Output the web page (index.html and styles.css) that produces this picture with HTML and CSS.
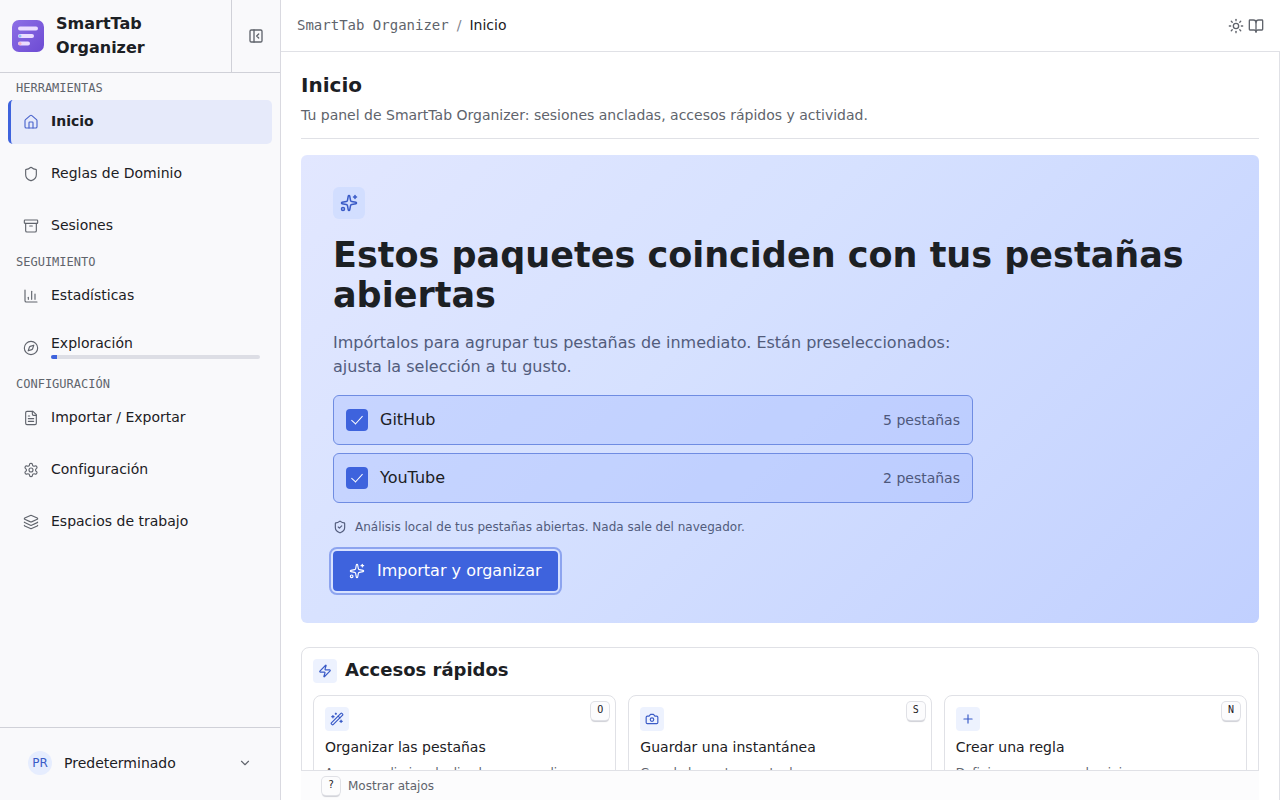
FILE: index.html
```
<!DOCTYPE html>
<html lang="es">
<head>
    <meta charset="UTF-8">
    <meta name="viewport" content="width=device-width, initial-scale=1.0">
    <title>SmartTab Organizer</title>
    <link rel="stylesheet" href="styles.css">
</head>
<body>
    <aside class="sidebar">
        <div class="brand">
            <div class="brand-name">
                <svg class="logo" viewBox="0 0 32 32" aria-hidden="true">
                    <defs>
                        <linearGradient id="logo-bg" x1="0" y1="0" x2="1" y2="1">
                            <stop offset="0" stop-color="#8d6fe6"/>
                            <stop offset="1" stop-color="#6d4bd3"/>
                        </linearGradient>
                    </defs>
                    <rect width="32" height="32" rx="7" fill="url(#logo-bg)"/>
                    <rect x="6" y="6.500" width="20" height="4" rx="2" fill="#eadcff"/>
                    <rect x="6" y="14" width="16" height="4" rx="2" fill="#eadcff"/>
                    <rect x="6" y="21.500" width="12" height="4" rx="2" fill="#eadcff"/>
                    <circle cx="8" cy="16" r="1.500" fill="#8cc4f5"/>
                    <circle cx="8" cy="23.500" r="1.500" fill="#f7b3c8"/>
                </svg>
                <strong>SmartTab Organizer</strong>
            </div>
            <button class="collapse" type="button" aria-label="Contraer barra lateral">
                <svg class="icon" viewBox="0 0 24 24"><rect width="18" height="18" x="3" y="3" rx="2"/><path d="M9 3v18"/><path d="m16 15-3-3 3-3"/></svg>
            </button>
        </div>

        <nav class="nav">
            <h2>Herramientas</h2>
            <ul>
                <li><a class="active" href="#inicio">
                    <svg class="icon" viewBox="0 0 24 24"><path d="M15 21v-8a1 1 0 0 0-1-1h-4a1 1 0 0 0-1 1v8"/><path d="M3 10a2 2 0 0 1 .709-1.528l7-5.999a2 2 0 0 1 2.582 0l7 5.999A2 2 0 0 1 21 10v9a2 2 0 0 1-2 2H5a2 2 0 0 1-2-2z"/></svg>
                    <span>Inicio</span></a></li>
                <li><a href="#reglas">
                    <svg class="icon" viewBox="0 0 24 24"><path d="M20 13c0 5-3.500 7.500-7.660 8.950a1 1 0 0 1-.67-.01C7.500 20.500 4 18 4 13V6a1 1 0 0 1 1-1c2 0 4.500-1.200 6.240-2.720a1.170 1.170 0 0 1 1.520 0C14.510 3.810 17 5 19 5a1 1 0 0 1 1 1z"/></svg>
                    <span>Reglas de Dominio</span></a></li>
                <li><a href="#sesiones">
                    <svg class="icon" viewBox="0 0 24 24"><rect width="20" height="5" x="2" y="3" rx="1"/><path d="M4 8v11a2 2 0 0 0 2 2h12a2 2 0 0 0 2-2V8"/><path d="M10 12h4"/></svg>
                    <span>Sesiones</span></a></li>
            </ul>
            <h2>Seguimiento</h2>
            <ul>
                <li><a href="#estadisticas">
                    <svg class="icon" viewBox="0 0 24 24"><path d="M3 3v16a2 2 0 0 0 2 2h16"/><path d="M18 17V9"/><path d="M13 17V5"/><path d="M8 17v-3"/></svg>
                    <span>Estadísticas</span></a></li>
                <li><a href="#exploracion">
                    <svg class="icon" viewBox="0 0 24 24"><circle cx="12" cy="12" r="10"/><path d="m16.240 7.760-1.804 5.411a2 2 0 0 1-1.265 1.265L7.760 16.240l1.804-5.411a2 2 0 0 1 1.265-1.265z"/></svg>
                    <span class="explore">Exploración
                        <progress value="3" max="100" aria-label="Progreso de exploración"></progress>
                    </span></a></li>
            </ul>
            <h2>Configuración</h2>
            <ul>
                <li><a href="#importar">
                    <svg class="icon" viewBox="0 0 24 24"><path d="M15 2H6a2 2 0 0 0-2 2v16a2 2 0 0 0 2 2h12a2 2 0 0 0 2-2V7Z"/><path d="M14 2v4a2 2 0 0 0 2 2h4"/><path d="M10 9H8"/><path d="M16 13H8"/><path d="M16 17H8"/></svg>
                    <span>Importar / Exportar</span></a></li>
                <li><a href="#configuracion">
                    <svg class="icon" viewBox="0 0 24 24"><path d="M12.220 2h-.44a2 2 0 0 0-2 2v.18a2 2 0 0 1-1 1.730l-.43.25a2 2 0 0 1-2 0l-.15-.08a2 2 0 0 0-2.730.73l-.22.38a2 2 0 0 0 .73 2.730l.15.1a2 2 0 0 1 1 1.720v.51a2 2 0 0 1-1 1.740l-.15.09a2 2 0 0 0-.73 2.730l.22.38a2 2 0 0 0 2.730.73l.15-.08a2 2 0 0 1 2 0l.43.25a2 2 0 0 1 1 1.730V20a2 2 0 0 0 2 2h.44a2 2 0 0 0 2-2v-.18a2 2 0 0 1 1-1.730l.43-.25a2 2 0 0 1 2 0l.15.08a2 2 0 0 0 2.730-.73l.22-.39a2 2 0 0 0-.73-2.730l-.15-.08a2 2 0 0 1-1-1.740v-.5a2 2 0 0 1 1-1.740l.15-.09a2 2 0 0 0 .73-2.730l-.22-.38a2 2 0 0 0-2.730-.73l-.15.08a2 2 0 0 1-2 0l-.43-.25a2 2 0 0 1-1-1.730V4a2 2 0 0 0-2-2z"/><circle cx="12" cy="12" r="3"/></svg>
                    <span>Configuración</span></a></li>
                <li><a href="#espacios">
                    <svg class="icon" viewBox="0 0 24 24"><path d="M12.830 2.180a2 2 0 0 0-1.660 0L2.600 6.080a1 1 0 0 0 0 1.830l8.580 3.910a2 2 0 0 0 1.660 0l8.580-3.900a1 1 0 0 0 0-1.830z"/><path d="M2 12a1 1 0 0 0 .58.91l8.600 3.910a2 2 0 0 0 1.650 0l8.580-3.900A1 1 0 0 0 22 12"/><path d="M2 17a1 1 0 0 0 .58.91l8.600 3.910a2 2 0 0 0 1.650 0l8.580-3.900A1 1 0 0 0 22 17"/></svg>
                    <span>Espacios de trabajo</span></a></li>
            </ul>
        </nav>

        <div class="workspace">
            <button type="button">
                <span class="avatar">PR</span>
                <span class="workspace-name">Predeterminado</span>
                <svg class="icon" viewBox="0 0 24 24"><path d="m6 9 6 6 6-6"/></svg>
            </button>
        </div>
    </aside>

    <div class="page">
        <header class="topbar">
            <div class="breadcrumb">
                <a href="#inicio">SmartTab Organizer</a>
                <span class="sep">/</span>
                <span>Inicio</span>
            </div>
            <div class="actions">
                <button type="button" aria-label="Cambiar tema">
                    <svg class="icon" viewBox="0 0 24 24"><circle cx="12" cy="12" r="4"/><path d="M12 2v2"/><path d="M12 20v2"/><path d="m4.930 4.930 1.410 1.410"/><path d="m17.660 17.660 1.410 1.410"/><path d="M2 12h2"/><path d="M20 12h2"/><path d="m6.340 17.660-1.410 1.410"/><path d="m19.070 4.930-1.410 1.410"/></svg>
                </button>
                <button type="button" aria-label="Documentación">
                    <svg class="icon" viewBox="0 0 24 24"><path d="M12 7v14"/><path d="M3 18a1 1 0 0 1-1-1V4a1 1 0 0 1 1-1h5a4 4 0 0 1 4 4 4 4 0 0 1 4-4h5a1 1 0 0 1 1 1v13a1 1 0 0 1-1 1h-6a3 3 0 0 0-3 3 3 3 0 0 0-3-3z"/></svg>
                </button>
            </div>
        </header>

        <div class="content">
            <main>
                <div class="page-title">
                    <h1>Inicio</h1>
                    <p>Tu panel de SmartTab Organizer: sesiones ancladas, accesos rápidos y actividad.</p>
                </div>

                <section class="hero">
                    <span class="hero-icon">
                        <svg class="icon" viewBox="0 0 24 24"><path d="M11.017 2.814a1 1 0 0 1 1.966 0l1.051 5.558a2 2 0 0 0 1.594 1.594l5.558 1.051a1 1 0 0 1 0 1.966l-5.558 1.051a2 2 0 0 0-1.594 1.594l-1.051 5.558a1 1 0 0 1-1.966 0l-1.051-5.558a2 2 0 0 0-1.594-1.594l-5.558-1.051a1 1 0 0 1 0-1.966l5.558-1.051a2 2 0 0 0 1.594-1.594z"/><path d="M20 2v4"/><path d="M22 4h-4"/><circle cx="4" cy="20" r="2"/></svg>
                    </span>
                    <h2>Estos paquetes coinciden con tus pestañas abiertas</h2>
                    <p class="lead">Impórtalos para agrupar tus pestañas de inmediato. Están preseleccionados: ajusta la selección a tu gusto.</p>
                    <div class="packs">
                        <label class="pack">
                            <input type="checkbox" checked>
                            <span class="pack-name">GitHub</span>
                            <span class="pack-count">5 pestañas</span>
                        </label>
                        <label class="pack">
                            <input type="checkbox" checked>
                            <span class="pack-name">YouTube</span>
                            <span class="pack-count">2 pestañas</span>
                        </label>
                    </div>
                    <p class="note">
                        <svg class="icon" viewBox="0 0 24 24"><path d="M20 13c0 5-3.500 7.500-7.660 8.950a1 1 0 0 1-.67-.01C7.500 20.500 4 18 4 13V6a1 1 0 0 1 1-1c2 0 4.500-1.200 6.240-2.720a1.170 1.170 0 0 1 1.520 0C14.510 3.810 17 5 19 5a1 1 0 0 1 1 1z"/><path d="m9 12 2 2 4-4"/></svg>
                        Análisis local de tus pestañas abiertas. Nada sale del navegador.
                    </p>
                    <button class="import" type="button">
                        <svg class="icon" viewBox="0 0 24 24"><path d="M11.017 2.814a1 1 0 0 1 1.966 0l1.051 5.558a2 2 0 0 0 1.594 1.594l5.558 1.051a1 1 0 0 1 0 1.966l-5.558 1.051a2 2 0 0 0-1.594 1.594l-1.051 5.558a1 1 0 0 1-1.966 0l-1.051-5.558a2 2 0 0 0-1.594-1.594l-5.558-1.051a1 1 0 0 1 0-1.966l5.558-1.051a2 2 0 0 0 1.594-1.594z"/><path d="M20 2v4"/><path d="M22 4h-4"/><circle cx="4" cy="20" r="2"/></svg>
                        Importar y organizar
                    </button>
                </section>

                <section class="quick">
                    <div class="quick-head">
                        <span class="tile"><svg class="icon" viewBox="0 0 24 24"><path d="M4 14a1 1 0 0 1-.78-1.630l9.900-10.200a.5.5 0 0 1 .86.46l-1.920 6.020A1 1 0 0 0 13 10h7a1 1 0 0 1 .78 1.630l-9.900 10.200a.5.5 0 0 1-.86-.46l1.920-6.020A1 1 0 0 0 11 14z"/></svg></span>
                        <h2>Accesos rápidos</h2>
                    </div>
                    <div class="cards">
                        <button class="card" type="button">
                            <span class="tile"><svg class="icon" viewBox="0 0 24 24"><path d="m21.640 3.640-1.280-1.280a1.210 1.210 0 0 0-1.720 0L2.360 18.640a1.210 1.210 0 0 0 0 1.720l1.280 1.280a1.200 1.200 0 0 0 1.720 0L21.640 5.360a1.200 1.200 0 0 0 0-1.720"/><path d="m14 7 3 3"/><path d="M5 6v4"/><path d="M19 14v4"/><path d="M10 2v2"/><path d="M7 8H3"/><path d="M21 16h-4"/><path d="M11 3H9"/></svg></span>
                            <span class="card-title">Organizar las pestañas</span>
                            <span class="card-text">Agrupa y elimina duplicados con un clic.</span>
                            <kbd>O</kbd>
                        </button>
                        <button class="card" type="button">
                            <span class="tile"><svg class="icon" viewBox="0 0 24 24"><path d="M14.500 4h-5L7 7H4a2 2 0 0 0-2 2v9a2 2 0 0 0 2 2h16a2 2 0 0 0 2-2V9a2 2 0 0 0-2-2h-3z"/><circle cx="12" cy="13" r="3"/></svg></span>
                            <span class="card-title">Guardar una instantánea</span>
                            <span class="card-text">Guarda la ventana actual.</span>
                            <kbd>S</kbd>
                        </button>
                        <button class="card" type="button">
                            <span class="tile"><svg class="icon" viewBox="0 0 24 24"><path d="M5 12h14"/><path d="M12 5v14"/></svg></span>
                            <span class="card-title">Crear una regla</span>
                            <span class="card-text">Definir un grupo por dominio.</span>
                            <kbd>N</kbd>
                        </button>
                    </div>
                </section>
            </main>
            <footer class="hints">
                <kbd>?</kbd>
                <span>Mostrar atajos</span>
            </footer>
        </div>
    </div>
</body>
</html>
```
FILE: styles.css
```
* {box-sizing: border-box;}
body {
    margin: 0; height: 100vh; display: flex; overflow: hidden;
    font-family: "DejaVu Sans", sans-serif; font-size: 14px; line-height: 20px;
    color: #1c2024; background-color: white;
}
h1, h2, p, ul {margin: 0; padding: 0;}
ul {list-style: none;}
a {color: inherit; text-decoration: none;}
button {font: inherit; color: inherit; background: none; border: none; padding: 0; cursor: pointer;}
.icon {
    width: 16px; height: 16px; flex: none; display: block;
    fill: none; stroke: currentColor; stroke-width: 2; stroke-linecap: round; stroke-linejoin: round;
}

/* sidebar */
.sidebar {
    width: 281px; flex: none; display: flex; flex-direction: column;
    background-color: #f9f9fb; border-right: 1px solid #d9d9e0;
}
.brand {display: flex; height: 73px; border-bottom: 1px solid #d0d1d8;}
.brand-name {flex: 1; display: flex; align-items: center; gap: 12px; padding-left: 12px;}
.brand-name strong {font-size: 16px; line-height: 24px;}
.logo {width: 32px; height: 32px; flex: none;}
.collapse {width: 49px; display: flex; align-items: center; justify-content: center; border-left: 1px solid #d0d1d8; color: #60646c;}

.nav {flex: 1; padding: 1px 8px 0; overflow-y: auto;}
.nav h2 {
    padding: 2px 8px 0; line-height: 24px; color: #60646c; text-transform: uppercase;
    font-family: "DejaVu Sans Mono", monospace; font-size: 12px; font-weight: normal;
}
.nav ul {display: flex; flex-direction: column; gap: 8px;}
.nav a {
    display: flex; align-items: center; gap: 12px; height: 44px; padding: 0 12px;
    border-left: 3px solid transparent; border-radius: 5px;
}
.nav a > .icon {color: #60646c; stroke-width: 1.7;}
.nav a > span {padding-bottom: 2px;}
.nav .active {background-color: #e6eafa; border-left-color: #3e63dd; font-weight: bold;}
.nav .active > .icon {color: #4a64cc;}
.nav .explore {flex: 1; display: flex; flex-direction: column; gap: 2px; padding-bottom: 4px;}
progress {
    appearance: none; display: block; width: 100%; height: 4px;
    border: none; border-radius: 2px; overflow: hidden; background-color: #dddee5;
}
progress::-webkit-progress-bar {background-color: #dddee5;}
progress::-webkit-progress-value {background-color: #3e63dd;}

.workspace {padding: 15px 16px 17px; border-top: 1px solid #d0d1d8;}
.workspace button {display: flex; align-items: center; gap: 12px; width: 100%; height: 40px; padding: 0 12px; text-align: left;}
.workspace-name {flex: 1;}
.workspace .icon {width: 14px; height: 14px; color: #60646c;}
.avatar {
    width: 24px; height: 24px; border-radius: 50%; text-align: center;
    font-size: 12px; line-height: 24px; color: #3a5bc7; background-color: #e6edfe;
}

/* top bar */
.page {flex: 1; min-width: 0; display: flex; flex-direction: column;}
.topbar {
    display: flex; align-items: center; justify-content: space-between;
    height: 52px; padding: 0 16px; border-bottom: 1px solid #e0e1e6;
}
.breadcrumb {display: flex; gap: 8px; padding-bottom: 1px;}
.breadcrumb a {font-family: "DejaVu Sans Mono", monospace; color: #60646c;}
.sep {color: #80838d;}
.actions {display: flex; gap: 4px; color: #60646c;}

/* content */
.content {flex: 1; min-height: 0; display: flex; flex-direction: column; border-right: 1px solid #e0e1e6;}
main {flex: 1; min-height: 0; overflow-y: auto; scrollbar-width: none; padding: 20px 20px 0;}
.page-title {padding-bottom: 12px; margin-bottom: 16px; border-bottom: 1px solid #e0e1e6;}
.page-title h1 {font-size: 20px; line-height: 26px;}
.page-title p {margin-top: 6px; line-height: 22px; color: #60646c;}

.hero {
    display: flex; flex-direction: column; align-items: flex-start; gap: 16px;
    padding: 32px; margin-bottom: 24px; border-radius: 6px;
    background: linear-gradient(135deg, #e2e7ff, #d6e1ff 40%, #c1d0ff);
}
.hero-icon {display: grid; place-items: center; width: 32px; height: 32px; border-radius: 6px; background-color: #d2deff; color: #3a5bc7;}
.hero-icon .icon {width: 18px; height: 18px;}
.hero h2 {font-size: 35px; line-height: 40px;}
.lead {max-width: 640px; font-size: 16px; line-height: 24px; color: #525c7c;}
.packs {display: flex; flex-direction: column; gap: 8px; width: 100%; max-width: 640px;}
.pack {
    display: flex; align-items: center; gap: 12px; height: 50px; padding: 0 12px;
    border: 1px solid #6f8ce2; border-radius: 6px; background-color: rgba(160, 184, 255, 0.35);
}
.pack input {
    appearance: none; display: grid; place-items: center; width: 22px; height: 22px; margin: 0;
    border-radius: 4px; background-color: #3e63dd;
}
.pack input:checked::after {
    content: ""; width: 5px; height: 10px; margin-bottom: 4px;
    border: solid white; border-width: 0 1px 1px 0; transform: rotate(42deg);
}
.pack-name {flex: 1; font-size: 16px; line-height: 24px;}
.pack-count {color: #4d587c;}
.note {display: flex; align-items: center; gap: 8px; font-size: 12px; line-height: 16px; color: #525c7c;}
.note .icon {width: 14px; height: 14px;}
.import {
    display: flex; align-items: center; gap: 12px; height: 40px; padding: 0 16px; border-radius: 4px;
    font-size: 16px; line-height: 24px; color: white; background-color: #3e63dd;
    outline: 2px solid #8da4ef; outline-offset: 2px;
}
.import .icon {stroke-width: 1.7;}

/* quick access */
.quick {padding: 11px; border: 1px solid #e0e1e6; border-radius: 8px;}
.quick-head {display: flex; align-items: flex-start; gap: 8px; margin-bottom: 12px;}
.quick h2 {font-size: 18px; line-height: 22px;}
.tile {display: grid; place-items: center; width: 24px; height: 24px; border-radius: 4px; background-color: #edf2fe; color: #3a5bc7;}
.tile .icon {width: 14px; height: 14px;}
.cards {display: grid; grid-template-columns: repeat(3, 1fr); gap: 12px;}
.card {
    position: relative; display: flex; flex-direction: column; align-items: flex-start;
    padding: 11px; border: 1px solid #e0e1e6; border-radius: 8px; text-align: left;
}
.card-title {margin: 6px 0 8px;}
.card-text {font-size: 12px; line-height: 16px; color: #60646c;}
kbd {
    width: 18px; height: 18px; border-radius: 4px; text-align: center;
    font-family: "DejaVu Sans Mono", monospace; font-size: 10px; line-height: 16px; color: #1c2024;
    background-color: #fcfcfd; box-shadow: 0 0 0 1px #e0e1e6, 0 2px 1px #cfd0d6;
}
.card kbd {position: absolute; top: 6px; right: 6px;}

.hints {
    display: flex; align-items: center; gap: 8px; height: 30px; margin: 0 20px; padding: 0 21px;
    border-top: 1px solid #e0e1e6; background-color: #fcfcfd; font-size: 12px; line-height: 16px; color: #60646c;
}
```
